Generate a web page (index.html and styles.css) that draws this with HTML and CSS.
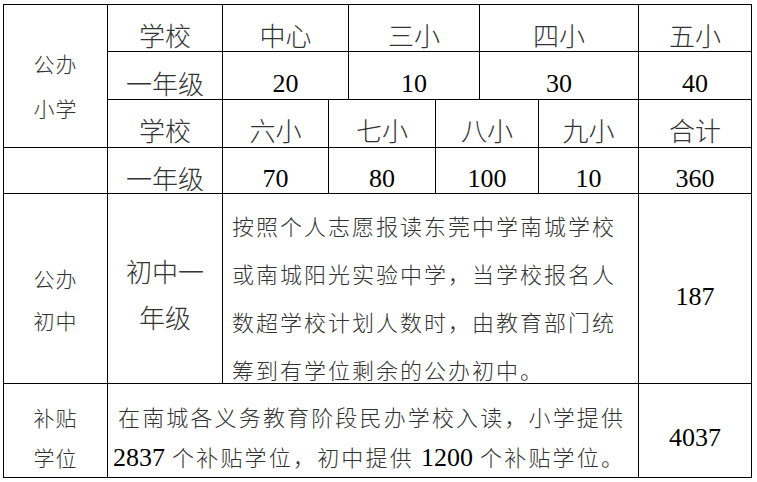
FILE: index.html
```html
<!DOCTYPE html>
<html lang="zh-CN">
<head>
<meta charset="utf-8">
<title>学位分配表</title>
<link rel="stylesheet" href="styles.css">
</head>
<body>
<div class="tbl">
  <div class="cell side rows3"><span>公办<br>小学</span></div>
  <div class="cell head">学校</div>
  <div class="cell head span2">中心</div>
  <div class="cell head span2">三小</div>
  <div class="cell head span2">四小</div>
  <div class="cell head">五小</div>

  <div class="cell head">一年级</div>
  <div class="cell num span2">20</div>
  <div class="cell num span2">10</div>
  <div class="cell num span2">30</div>
  <div class="cell num">40</div>

  <div class="cell head r3">学校</div>
  <div class="cell head r3">六小</div>
  <div class="cell head r3 span2">七小</div>
  <div class="cell head r3 span2">八小</div>
  <div class="cell head r3">九小</div>
  <div class="cell head r3">合计</div>

  <div class="cell"></div>
  <div class="cell head">一年级</div>
  <div class="cell num">70</div>
  <div class="cell num span2">80</div>
  <div class="cell num span2">100</div>
  <div class="cell num">10</div>
  <div class="cell num">360</div>

  <div class="cell side junior"><span>公办<br>初中</span></div>
  <div class="cell head grade"><span>初中一<br>年级</span></div>
  <div class="cell para span6"><p>按照个人志愿报读东莞中学南城学校或南城阳光实验中学，当学校报名人数超学校计划人数时，由教育部门统筹到有学位剩余的公办初中。</p></div>
  <div class="cell num n187">187</div>

  <div class="cell side subsidy"><span>补贴<br>学位</span></div>
  <div class="cell para2 span7"><p>在南城各义务教育阶段民办学校入读，小学提供<br><span class="d">2837</span> 个补贴学位，初中提供 <span class="d">1200</span> 个补贴学位。</p></div>
  <div class="cell num n4037">4037</div>
</div>
</body>
</html>
```

FILE: styles.css
```css
html, body {
  margin: 0;
  padding: 0;
  background: #fff;
}

body {
  font-family: "Liberation Serif", "Noto Sans CJK SC", serif;
  color: #111;
}

.tbl {
  display: grid;
  grid-template-columns: 103px 114px 105px 19px 86px 43px 58px 99px 112px;
  grid-template-rows: 46px 47px 47px 45px 189px 93px;
  gap: 1px;
  padding: 1px;
  background: #000;
  width: max-content;
  margin: 4px 0 0 3px;
}

.cell {
  background: #fff;
  display: flex;
  align-items: center;
  justify-content: center;
  text-align: center;
  padding-top: 14px;
  box-sizing: border-box;
  overflow: visible;
}

.span2 { grid-column: span 2; }
.span6 { grid-column: span 6; }
.span7 { grid-column: span 7; }
.rows3 { grid-row: span 3; }

.head {
  font-family: "Noto Sans CJK SC", sans-serif;
  font-weight: 300;
  font-size: 26px;
  line-height: 30px;
  color: #333;
}

.r3 { padding-top: 13px; }

.num {
  font-family: "Liberation Serif", "Times New Roman", serif;
  font-size: 26px;
  line-height: 30px;
  color: #000;
  padding-top: 16px;
}

.side {
  font-family: "Noto Sans CJK SC", sans-serif;
  font-weight: 300;
  font-size: 21px;
  letter-spacing: 1px;
  line-height: 45px;
  color: #333;
  padding-top: 20px;
}

.side.junior { line-height: 42px; padding-top: 21px; }
.side.subsidy { line-height: 40px; padding-top: 13px; }

.grade { line-height: 46px; padding-top: 11px; }

.n187 { padding-top: 17px; }
.n4037 { padding-top: 15px; }

.para, .para2 {
  font-family: "Noto Sans CJK SC", sans-serif;
  font-weight: 300;
  font-size: 22px;
  letter-spacing: 2px;
  color: #333;
  text-align: left;
  justify-content: flex-start;
}

.para {
  align-items: flex-start;
  padding: 7px 0 0 9px;
  line-height: 48px;
}

.para2 {
  padding: 12px 13px 0 5px;
  line-height: 40px;
}

.para p, .para2 p {
  margin: 0;
}

.para2 p {
  width: 100%;
  text-align: justify;
  text-align-last: justify;
  text-indent: 5px;
}

.d {
  font-family: "Liberation Serif", "Times New Roman", serif;
  font-size: 26px;
  letter-spacing: 0;
  color: #000;
}
```
